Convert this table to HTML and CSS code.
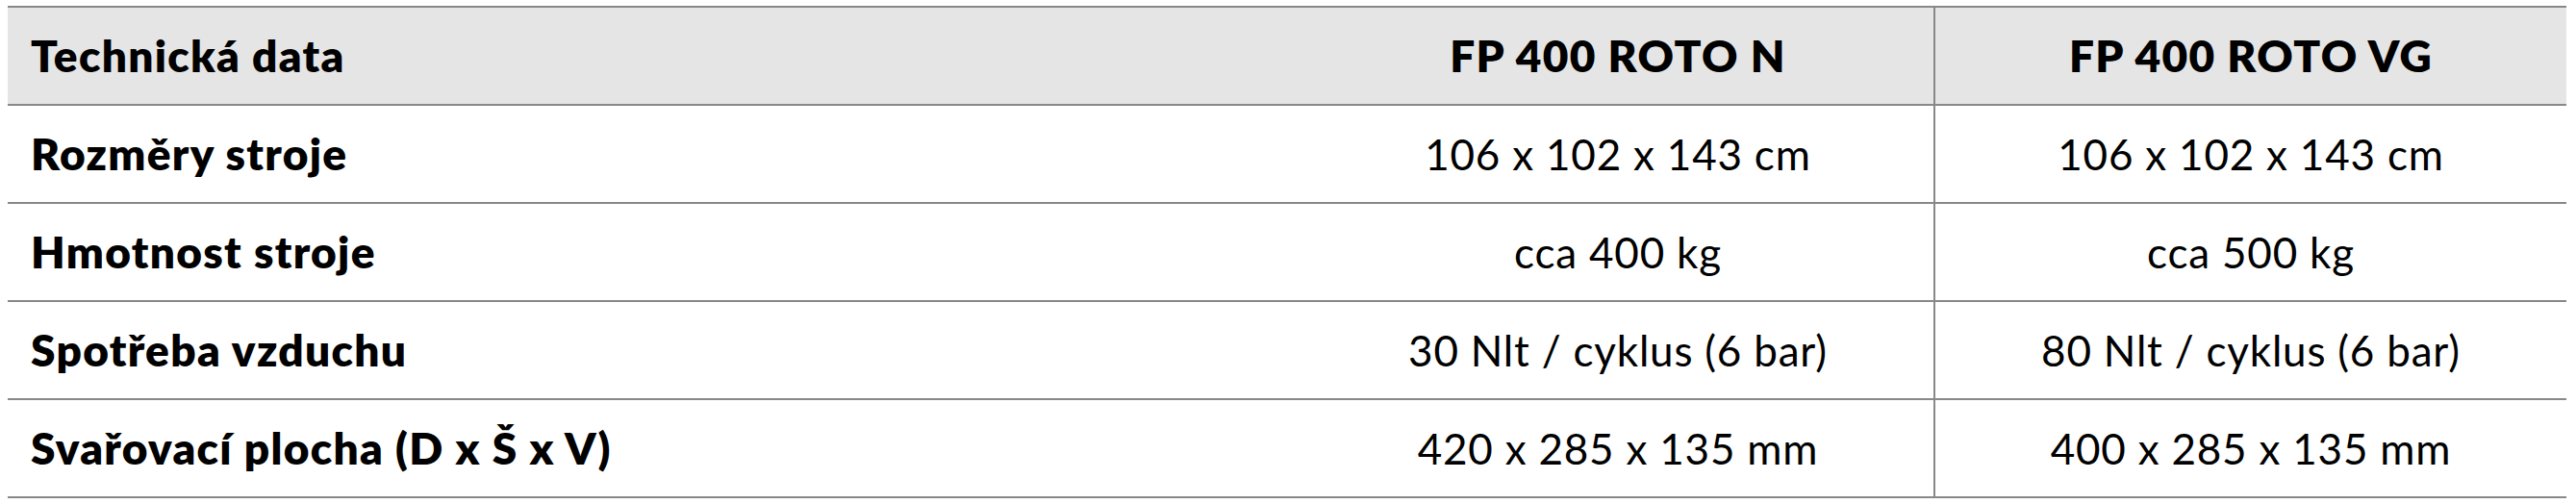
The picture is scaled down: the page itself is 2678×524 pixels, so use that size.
FILE: index.html
```html
<!DOCTYPE html>
<html lang="cs">
<head>
<meta charset="utf-8">
<title>Technická data</title>
<link rel="stylesheet" href="styles.css">
</head>
<body>
<table class="spec">
  <colgroup>
    <col class="col-label">
    <col class="col-a">
    <col class="col-b">
  </colgroup>
  <thead>
    <tr>
      <th class="label">Technická data</th>
      <th class="val">FP 400 ROTO N</th>
      <th class="val sep">FP 400 ROTO VG</th>
    </tr>
  </thead>
  <tbody>
    <tr>
      <td class="label">Rozměry stroje</td>
      <td class="val">106 x 102 x 143 cm</td>
      <td class="val sep">106 x 102 x 143 cm</td>
    </tr>
    <tr>
      <td class="label">Hmotnost stroje</td>
      <td class="val">cca 400 kg</td>
      <td class="val sep">cca 500 kg</td>
    </tr>
    <tr>
      <td class="label">Spotřeba vzduchu</td>
      <td class="val">30 Nlt / cyklus (6 bar)</td>
      <td class="val sep">80 Nlt / cyklus (6 bar)</td>
    </tr>
    <tr>
      <td class="label">Svařovací plocha (D x Š x V)</td>
      <td class="val">420 x 285 x 135 mm</td>
      <td class="val sep">400 x 285 x 135 mm</td>
    </tr>
  </tbody>
</table>
</body>
</html>
```

FILE: styles.css
```css
html, body {
  background: #ffffff;
}
body {
  margin: 6px 10px 0 8px;
  font-family: "Lato", "Liberation Sans", sans-serif;
  color: #000000;
}
.spec {
  width: 2660px;
  border-collapse: collapse;
  table-layout: fixed;
}
.col-label { width: 50.6%; }
.col-a { width: 24.7%; }
.col-b { width: 24.7%; }
.spec th,
.spec td {
  height: 100px;
  padding: 0 24px;
  border-top: 2px solid #888888;
  border-bottom: 2px solid #888888;
  font-size: 44px;
  line-height: 1;
  vertical-align: middle;
  white-space: nowrap;
}
.spec th,
.spec td.label {
  font-size: 46px;
  font-weight: 800;
  letter-spacing: 1.3px;
}
.spec th {
  background: #e5e5e5;
}
.spec td.val {
  font-weight: 400;
  letter-spacing: 0.8px;
}
.label { text-align: left; }
.val { text-align: center; }
.sep { border-left: 2px solid #888888; }
```
